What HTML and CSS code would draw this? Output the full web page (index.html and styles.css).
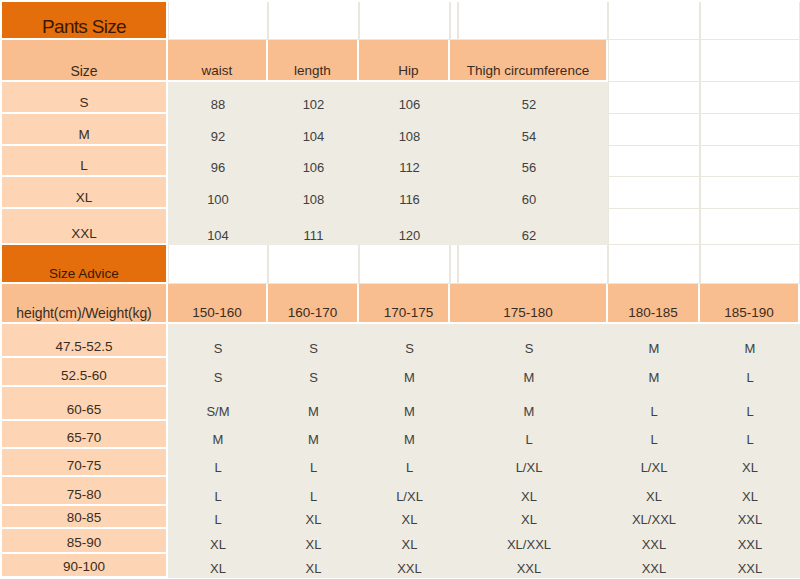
FILE: index.html
```html
<!DOCTYPE html>
<html>
<head>
<meta charset="utf-8">
<link rel="stylesheet" href="styles.css">
</head>
<body>
<div class="chart">
  <!-- Pants size title row -->
  <div class="cell title"><span class="big">Pants Size</span></div>
  <div class="cell blank"></div>
  <div class="cell blank"></div>
  <div class="cell blank"></div>
  <div class="cell blank narrow"></div>
  <div class="cell blank"></div>
  <div class="cell blank"></div>
  <div class="cell blank"></div>

  <!-- Pants header -->
  <div class="cell head first">Size</div>
  <div class="cell head">waist</div>
  <div class="cell head">length</div>
  <div class="cell head c4">Hip</div>
  <div class="cell head span2">Thigh circumference</div>
  <div class="cell blank"></div>
  <div class="cell blank"></div>

  <!-- Pants rows -->
  <div class="cell side">S</div><div class="cell data">88</div><div class="cell data">102</div><div class="cell data c4">106</div><div class="cell data span2">52</div><div class="cell blank"></div><div class="cell blank"></div>
  <div class="cell side">M</div><div class="cell data">92</div><div class="cell data">104</div><div class="cell data c4">108</div><div class="cell data span2">54</div><div class="cell blank"></div><div class="cell blank"></div>
  <div class="cell side">L</div><div class="cell data">96</div><div class="cell data">106</div><div class="cell data c4">112</div><div class="cell data span2">56</div><div class="cell blank"></div><div class="cell blank"></div>
  <div class="cell side">XL</div><div class="cell data">100</div><div class="cell data">108</div><div class="cell data c4">116</div><div class="cell data span2">60</div><div class="cell blank"></div><div class="cell blank"></div>
  <div class="cell side">XXL</div><div class="cell data">104</div><div class="cell data">111</div><div class="cell data c4">120</div><div class="cell data span2">62</div><div class="cell blank"></div><div class="cell blank"></div>

  <!-- Size advice title row -->
  <div class="cell title"><span class="mid">Size Advice</span></div>
  <div class="cell blank"></div>
  <div class="cell blank"></div>
  <div class="cell blank"></div>
  <div class="cell blank narrow"></div>
  <div class="cell blank"></div>
  <div class="cell blank"></div>
  <div class="cell blank"></div>

  <!-- Advice header -->
  <div class="cell head first">height(cm)/Weight(kg)</div>
  <div class="cell head">150-160</div>
  <div class="cell head">160-170</div>
  <div class="cell head c4">170-175</div>
  <div class="cell head span2">175-180</div>
  <div class="cell head">180-185</div>
  <div class="cell head">185-190</div>

  <!-- Advice rows -->
  <div class="cell side">47.5-52.5</div><div class="cell data">S</div><div class="cell data">S</div><div class="cell data c4">S</div><div class="cell data span2">S</div><div class="cell data">M</div><div class="cell data">M</div>
  <div class="cell side">52.5-60</div><div class="cell data">S</div><div class="cell data">S</div><div class="cell data c4">M</div><div class="cell data span2">M</div><div class="cell data">M</div><div class="cell data">L</div>
  <div class="cell side">60-65</div><div class="cell data">S/M</div><div class="cell data">M</div><div class="cell data c4">M</div><div class="cell data span2">M</div><div class="cell data">L</div><div class="cell data">L</div>
  <div class="cell side">65-70</div><div class="cell data">M</div><div class="cell data">M</div><div class="cell data c4">M</div><div class="cell data span2">L</div><div class="cell data">L</div><div class="cell data">L</div>
  <div class="cell side">70-75</div><div class="cell data">L</div><div class="cell data">L</div><div class="cell data c4">L</div><div class="cell data span2">L/XL</div><div class="cell data">L/XL</div><div class="cell data">XL</div>
  <div class="cell side">75-80</div><div class="cell data">L</div><div class="cell data">L</div><div class="cell data c4">L/XL</div><div class="cell data span2">XL</div><div class="cell data">XL</div><div class="cell data">XL</div>
  <div class="cell side">80-85</div><div class="cell data">L</div><div class="cell data">XL</div><div class="cell data c4">XL</div><div class="cell data span2">XL</div><div class="cell data">XL/XXL</div><div class="cell data">XXL</div>
  <div class="cell side">85-90</div><div class="cell data">XL</div><div class="cell data">XL</div><div class="cell data c4">XL</div><div class="cell data span2">XL/XXL</div><div class="cell data">XXL</div><div class="cell data">XXL</div>
  <div class="cell side">90-100</div><div class="cell data">XL</div><div class="cell data">XL</div><div class="cell data c4">XXL</div><div class="cell data span2">XXL</div><div class="cell data">XXL</div><div class="cell data">XXL</div>
</div>
</body>
</html>
```

FILE: styles.css
```css
html, body {
  margin: 0;
  padding: 0;
  background: #ffffff;
}

body {
  width: 800px;
  height: 579px;
  overflow: hidden;
  font-family: "Liberation Sans", Arial, sans-serif;
  color: #404040;
}

.chart {
  display: grid;
  grid-template-columns: 166px 100px 91px 91px 8px 150px 92px 100px;
  grid-template-rows: 38px 42px 32px 32px 31px 32px 36px 39px 40px 34px 29px 34px 28px 28px 29px 23px 25px 24px;
  padding: 2px 0 0 2px;
}

.cell {
  box-sizing: border-box;
  display: flex;
  align-items: flex-end;
  justify-content: center;
  font-size: 13.5px;
  line-height: 16px;
  padding-bottom: 1px;
  white-space: nowrap;
}

.span2 {
  grid-column: span 2;
}

.c4 {
  padding-left: 10px;
}

.title {
  background: #e46d0c;
  color: #3a1a02;
  border-right: 2px solid #ffffff;
  border-bottom: 2px solid #ffffff;
  padding-bottom: 0;
}

.big {
  font-size: 19px;
  line-height: 22px;
  letter-spacing: -0.7px;
}

.mid {
  font-size: 13.5px;
  line-height: 16px;
}

.head {
  background: #f9be90;
  color: #3b2c20;
  border-right: 2px solid #ffffff;
  border-bottom: 2px solid #ffffff;
  font-size: 13.5px;
}

.head.first {
  font-size: 14px;
  letter-spacing: -0.1px;
}

.side {
  background: #fdd5b4;
  color: #3b2c20;
  border-right: 2px solid #ffffff;
  border-bottom: 2px solid #ffffff;
}

.data {
  background: #eeebe2;
  font-size: 13px;
}

.blank {
  background: #ffffff;
  border-right: 1px solid #e9e7de;
  border-bottom: 1px solid #e9e7de;
  border-left: 1px solid #e9e7de;
}
```
